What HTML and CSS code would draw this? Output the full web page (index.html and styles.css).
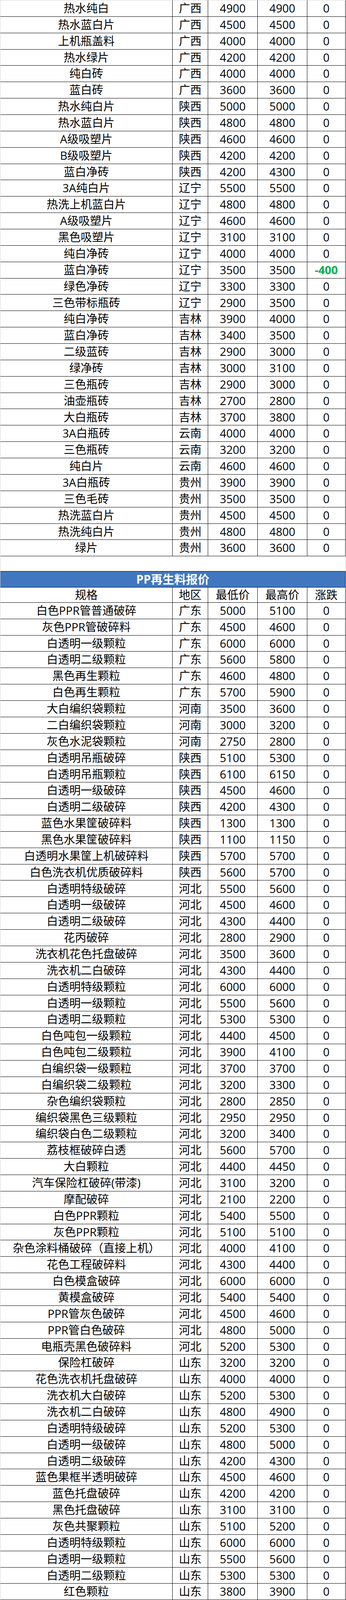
FILE: index.html
```html
<!DOCTYPE html>
<html lang="zh-CN">
<head>
<meta charset="utf-8">
<title>报价</title>
<link rel="stylesheet" href="styles.css">
</head>
<body>
<div class="sheet">
  <div class="tbl tbl-a">
    <div class="row"><div class="c c1">热水纯白</div><div class="c c2">广西</div><div class="c c3">4900</div><div class="c c4">4900</div><div class="c c5">0</div></div>
    <div class="row"><div class="c c1">热水蓝白片</div><div class="c c2">广西</div><div class="c c3">4500</div><div class="c c4">4500</div><div class="c c5">0</div></div>
    <div class="row"><div class="c c1">上机瓶盖料</div><div class="c c2">广西</div><div class="c c3">4000</div><div class="c c4">4000</div><div class="c c5">0</div></div>
    <div class="row"><div class="c c1">热水绿片</div><div class="c c2">广西</div><div class="c c3">4200</div><div class="c c4">4200</div><div class="c c5">0</div></div>
    <div class="row"><div class="c c1">纯白砖</div><div class="c c2">广西</div><div class="c c3">4000</div><div class="c c4">4000</div><div class="c c5">0</div></div>
    <div class="row"><div class="c c1">蓝白砖</div><div class="c c2">广西</div><div class="c c3">3600</div><div class="c c4">3600</div><div class="c c5">0</div></div>
    <div class="row"><div class="c c1">热水纯白片</div><div class="c c2">陕西</div><div class="c c3">5000</div><div class="c c4">5000</div><div class="c c5">0</div></div>
    <div class="row"><div class="c c1">热水蓝白片</div><div class="c c2">陕西</div><div class="c c3">4800</div><div class="c c4">4800</div><div class="c c5">0</div></div>
    <div class="row"><div class="c c1">A级吸塑片</div><div class="c c2">陕西</div><div class="c c3">4600</div><div class="c c4">4600</div><div class="c c5">0</div></div>
    <div class="row"><div class="c c1">B级吸塑片</div><div class="c c2">陕西</div><div class="c c3">4200</div><div class="c c4">4200</div><div class="c c5">0</div></div>
    <div class="row"><div class="c c1">蓝白净砖</div><div class="c c2">陕西</div><div class="c c3">4200</div><div class="c c4">4300</div><div class="c c5">0</div></div>
    <div class="row"><div class="c c1">3A纯白片</div><div class="c c2">辽宁</div><div class="c c3">5500</div><div class="c c4">5500</div><div class="c c5">0</div></div>
    <div class="row"><div class="c c1">热洗上机蓝白片</div><div class="c c2">辽宁</div><div class="c c3">4800</div><div class="c c4">4800</div><div class="c c5">0</div></div>
    <div class="row"><div class="c c1">A级吸塑片</div><div class="c c2">辽宁</div><div class="c c3">4600</div><div class="c c4">4600</div><div class="c c5">0</div></div>
    <div class="row"><div class="c c1">黑色吸塑片</div><div class="c c2">辽宁</div><div class="c c3">3100</div><div class="c c4">3100</div><div class="c c5">0</div></div>
    <div class="row"><div class="c c1">纯白净砖</div><div class="c c2">辽宁</div><div class="c c3">4000</div><div class="c c4">4000</div><div class="c c5">0</div></div>
    <div class="row"><div class="c c1">蓝白净砖</div><div class="c c2">辽宁</div><div class="c c3">3500</div><div class="c c4">3500</div><div class="c c5 down">-400</div></div>
    <div class="row"><div class="c c1">绿色净砖</div><div class="c c2">辽宁</div><div class="c c3">3300</div><div class="c c4">3300</div><div class="c c5">0</div></div>
    <div class="row"><div class="c c1">三色带标瓶砖</div><div class="c c2">辽宁</div><div class="c c3">2900</div><div class="c c4">3500</div><div class="c c5">0</div></div>
    <div class="row"><div class="c c1">纯白净砖</div><div class="c c2">吉林</div><div class="c c3">3900</div><div class="c c4">4000</div><div class="c c5">0</div></div>
    <div class="row"><div class="c c1">蓝白净砖</div><div class="c c2">吉林</div><div class="c c3">3400</div><div class="c c4">3500</div><div class="c c5">0</div></div>
    <div class="row"><div class="c c1">二级蓝砖</div><div class="c c2">吉林</div><div class="c c3">2900</div><div class="c c4">3000</div><div class="c c5">0</div></div>
    <div class="row"><div class="c c1">绿净砖</div><div class="c c2">吉林</div><div class="c c3">3000</div><div class="c c4">3100</div><div class="c c5">0</div></div>
    <div class="row"><div class="c c1">三色瓶砖</div><div class="c c2">吉林</div><div class="c c3">2900</div><div class="c c4">3000</div><div class="c c5">0</div></div>
    <div class="row"><div class="c c1">油壶瓶砖</div><div class="c c2">吉林</div><div class="c c3">2700</div><div class="c c4">2800</div><div class="c c5">0</div></div>
    <div class="row"><div class="c c1">大白瓶砖</div><div class="c c2">吉林</div><div class="c c3">3700</div><div class="c c4">3800</div><div class="c c5">0</div></div>
    <div class="row"><div class="c c1">3A白瓶砖</div><div class="c c2">云南</div><div class="c c3">4000</div><div class="c c4">4000</div><div class="c c5">0</div></div>
    <div class="row"><div class="c c1">三色瓶砖</div><div class="c c2">云南</div><div class="c c3">3200</div><div class="c c4">3200</div><div class="c c5">0</div></div>
    <div class="row"><div class="c c1">纯白片</div><div class="c c2">云南</div><div class="c c3">4600</div><div class="c c4">4600</div><div class="c c5">0</div></div>
    <div class="row"><div class="c c1">3A白瓶砖</div><div class="c c2">贵州</div><div class="c c3">3900</div><div class="c c4">3900</div><div class="c c5">0</div></div>
    <div class="row"><div class="c c1">三色毛砖</div><div class="c c2">贵州</div><div class="c c3">3500</div><div class="c c4">3500</div><div class="c c5">0</div></div>
    <div class="row"><div class="c c1">热洗蓝白片</div><div class="c c2">贵州</div><div class="c c3">4500</div><div class="c c4">4500</div><div class="c c5">0</div></div>
    <div class="row"><div class="c c1">热洗纯白片</div><div class="c c2">贵州</div><div class="c c3">4800</div><div class="c c4">4800</div><div class="c c5">0</div></div>
    <div class="row"><div class="c c1">绿片</div><div class="c c2">贵州</div><div class="c c3">3600</div><div class="c c4">3600</div><div class="c c5">0</div></div>
  </div>

  <div class="gap"></div>

  <div class="title">PP再生料报价</div>
  <div class="tbl tbl-b">
    <div class="row head"><div class="c c1">规格</div><div class="c c2">地区</div><div class="c c3">最低价</div><div class="c c4">最高价</div><div class="c c5">涨跌</div></div>
    <div class="row"><div class="c c1">白色PPR管普通破碎</div><div class="c c2">广东</div><div class="c c3">5000</div><div class="c c4">5100</div><div class="c c5">0</div></div>
    <div class="row"><div class="c c1">灰色PPR管破碎料</div><div class="c c2">广东</div><div class="c c3">4500</div><div class="c c4">4600</div><div class="c c5">0</div></div>
    <div class="row"><div class="c c1">白透明一级颗粒</div><div class="c c2">广东</div><div class="c c3">6000</div><div class="c c4">6000</div><div class="c c5">0</div></div>
    <div class="row"><div class="c c1">白透明二级颗粒</div><div class="c c2">广东</div><div class="c c3">5600</div><div class="c c4">5800</div><div class="c c5">0</div></div>
    <div class="row"><div class="c c1">黑色再生颗粒</div><div class="c c2">广东</div><div class="c c3">4600</div><div class="c c4">4800</div><div class="c c5">0</div></div>
    <div class="row"><div class="c c1">白色再生颗粒</div><div class="c c2">广东</div><div class="c c3">5700</div><div class="c c4">5900</div><div class="c c5">0</div></div>
    <div class="row"><div class="c c1">大白编织袋颗粒</div><div class="c c2">河南</div><div class="c c3">3500</div><div class="c c4">3600</div><div class="c c5">0</div></div>
    <div class="row"><div class="c c1">二白编织袋颗粒</div><div class="c c2">河南</div><div class="c c3">3000</div><div class="c c4">3200</div><div class="c c5">0</div></div>
    <div class="row"><div class="c c1">灰色水泥袋颗粒</div><div class="c c2">河南</div><div class="c c3">2750</div><div class="c c4">2800</div><div class="c c5">0</div></div>
    <div class="row"><div class="c c1">白透明吊瓶破碎</div><div class="c c2">陕西</div><div class="c c3">5100</div><div class="c c4">5300</div><div class="c c5">0</div></div>
    <div class="row"><div class="c c1">白透明吊瓶颗粒</div><div class="c c2">陕西</div><div class="c c3">6100</div><div class="c c4">6150</div><div class="c c5">0</div></div>
    <div class="row"><div class="c c1">白透明一级破碎</div><div class="c c2">陕西</div><div class="c c3">4500</div><div class="c c4">4600</div><div class="c c5">0</div></div>
    <div class="row"><div class="c c1">白透明二级破碎</div><div class="c c2">陕西</div><div class="c c3">4200</div><div class="c c4">4300</div><div class="c c5">0</div></div>
    <div class="row"><div class="c c1">蓝色水果筐破碎料</div><div class="c c2">陕西</div><div class="c c3">1300</div><div class="c c4">1300</div><div class="c c5">0</div></div>
    <div class="row"><div class="c c1">黑色水果筐破碎料</div><div class="c c2">陕西</div><div class="c c3">1100</div><div class="c c4">1150</div><div class="c c5">0</div></div>
    <div class="row"><div class="c c1">白透明水果筐上机破碎料</div><div class="c c2">陕西</div><div class="c c3">5700</div><div class="c c4">5700</div><div class="c c5">0</div></div>
    <div class="row"><div class="c c1">白色洗衣机优质破碎料</div><div class="c c2">陕西</div><div class="c c3">5600</div><div class="c c4">5700</div><div class="c c5">0</div></div>
    <div class="row"><div class="c c1">白透明特级破碎</div><div class="c c2">河北</div><div class="c c3">5500</div><div class="c c4">5600</div><div class="c c5">0</div></div>
    <div class="row"><div class="c c1">白透明一级破碎</div><div class="c c2">河北</div><div class="c c3">4500</div><div class="c c4">4600</div><div class="c c5">0</div></div>
    <div class="row"><div class="c c1">白透明二级破碎</div><div class="c c2">河北</div><div class="c c3">4300</div><div class="c c4">4400</div><div class="c c5">0</div></div>
    <div class="row"><div class="c c1">花丙破碎</div><div class="c c2">河北</div><div class="c c3">2800</div><div class="c c4">2900</div><div class="c c5">0</div></div>
    <div class="row"><div class="c c1">洗衣机花色托盘破碎</div><div class="c c2">河北</div><div class="c c3">3500</div><div class="c c4">3600</div><div class="c c5">0</div></div>
    <div class="row"><div class="c c1">洗衣机二白破碎</div><div class="c c2">河北</div><div class="c c3">4300</div><div class="c c4">4400</div><div class="c c5">0</div></div>
    <div class="row"><div class="c c1">白透明特级颗粒</div><div class="c c2">河北</div><div class="c c3">6000</div><div class="c c4">6000</div><div class="c c5">0</div></div>
    <div class="row"><div class="c c1">白透明一级颗粒</div><div class="c c2">河北</div><div class="c c3">5500</div><div class="c c4">5600</div><div class="c c5">0</div></div>
    <div class="row"><div class="c c1">白透明二级颗粒</div><div class="c c2">河北</div><div class="c c3">5300</div><div class="c c4">5300</div><div class="c c5">0</div></div>
    <div class="row"><div class="c c1">白色吨包一级颗粒</div><div class="c c2">河北</div><div class="c c3">4400</div><div class="c c4">4500</div><div class="c c5">0</div></div>
    <div class="row"><div class="c c1">白色吨包二级颗粒</div><div class="c c2">河北</div><div class="c c3">3900</div><div class="c c4">4100</div><div class="c c5">0</div></div>
    <div class="row"><div class="c c1">白编织袋一级颗粒</div><div class="c c2">河北</div><div class="c c3">3700</div><div class="c c4">3700</div><div class="c c5">0</div></div>
    <div class="row"><div class="c c1">白编织袋二级颗粒</div><div class="c c2">河北</div><div class="c c3">3200</div><div class="c c4">3300</div><div class="c c5">0</div></div>
    <div class="row"><div class="c c1">杂色编织袋颗粒</div><div class="c c2">河北</div><div class="c c3">2800</div><div class="c c4">2850</div><div class="c c5">0</div></div>
    <div class="row"><div class="c c1">编织袋黑色三级颗粒</div><div class="c c2">河北</div><div class="c c3">2950</div><div class="c c4">2950</div><div class="c c5">0</div></div>
    <div class="row"><div class="c c1">编织袋白色二级颗粒</div><div class="c c2">河北</div><div class="c c3">3200</div><div class="c c4">3400</div><div class="c c5">0</div></div>
    <div class="row"><div class="c c1">荔枝框破碎白透</div><div class="c c2">河北</div><div class="c c3">5600</div><div class="c c4">5700</div><div class="c c5">0</div></div>
    <div class="row"><div class="c c1">大白颗粒</div><div class="c c2">河北</div><div class="c c3">4400</div><div class="c c4">4450</div><div class="c c5">0</div></div>
    <div class="row"><div class="c c1">汽车保险杠破碎(带漆)</div><div class="c c2">河北</div><div class="c c3">3100</div><div class="c c4">3200</div><div class="c c5">0</div></div>
    <div class="row"><div class="c c1">摩配破碎</div><div class="c c2">河北</div><div class="c c3">2100</div><div class="c c4">2200</div><div class="c c5">0</div></div>
    <div class="row"><div class="c c1">白色PPR颗粒</div><div class="c c2">河北</div><div class="c c3">5400</div><div class="c c4">5500</div><div class="c c5">0</div></div>
    <div class="row"><div class="c c1">灰色PPR颗粒</div><div class="c c2">河北</div><div class="c c3">5100</div><div class="c c4">5100</div><div class="c c5">0</div></div>
    <div class="row"><div class="c c1">杂色涂料桶破碎（直接上机）</div><div class="c c2">河北</div><div class="c c3">4000</div><div class="c c4">4100</div><div class="c c5">0</div></div>
    <div class="row"><div class="c c1">花色工程破碎料</div><div class="c c2">河北</div><div class="c c3">4300</div><div class="c c4">4400</div><div class="c c5">0</div></div>
    <div class="row"><div class="c c1">白色模盒破碎</div><div class="c c2">河北</div><div class="c c3">6000</div><div class="c c4">6000</div><div class="c c5">0</div></div>
    <div class="row"><div class="c c1">黄模盒破碎</div><div class="c c2">河北</div><div class="c c3">5400</div><div class="c c4">5400</div><div class="c c5">0</div></div>
    <div class="row"><div class="c c1">PPR管灰色破碎</div><div class="c c2">河北</div><div class="c c3">4500</div><div class="c c4">4600</div><div class="c c5">0</div></div>
    <div class="row"><div class="c c1">PPR管白色破碎</div><div class="c c2">河北</div><div class="c c3">4800</div><div class="c c4">5000</div><div class="c c5">0</div></div>
    <div class="row"><div class="c c1">电瓶壳黑色破碎料</div><div class="c c2">河北</div><div class="c c3">5200</div><div class="c c4">5300</div><div class="c c5">0</div></div>
    <div class="row"><div class="c c1">保险杠破碎</div><div class="c c2">山东</div><div class="c c3">3200</div><div class="c c4">3200</div><div class="c c5">0</div></div>
    <div class="row"><div class="c c1">花色洗衣机托盘破碎</div><div class="c c2">山东</div><div class="c c3">4000</div><div class="c c4">4000</div><div class="c c5">0</div></div>
    <div class="row"><div class="c c1">洗衣机大白破碎</div><div class="c c2">山东</div><div class="c c3">5200</div><div class="c c4">5300</div><div class="c c5">0</div></div>
    <div class="row"><div class="c c1">洗衣机二白破碎</div><div class="c c2">山东</div><div class="c c3">4800</div><div class="c c4">4900</div><div class="c c5">0</div></div>
    <div class="row"><div class="c c1">白透明特级破碎</div><div class="c c2">山东</div><div class="c c3">5200</div><div class="c c4">5300</div><div class="c c5">0</div></div>
    <div class="row"><div class="c c1">白透明一级破碎</div><div class="c c2">山东</div><div class="c c3">4800</div><div class="c c4">5000</div><div class="c c5">0</div></div>
    <div class="row"><div class="c c1">白透明二级破碎</div><div class="c c2">山东</div><div class="c c3">4200</div><div class="c c4">4300</div><div class="c c5">0</div></div>
    <div class="row"><div class="c c1">蓝色果框半透明破碎</div><div class="c c2">山东</div><div class="c c3">4500</div><div class="c c4">4600</div><div class="c c5">0</div></div>
    <div class="row"><div class="c c1">蓝色托盘破碎</div><div class="c c2">山东</div><div class="c c3">4200</div><div class="c c4">4200</div><div class="c c5">0</div></div>
    <div class="row"><div class="c c1">黑色托盘破碎</div><div class="c c2">山东</div><div class="c c3">3100</div><div class="c c4">3100</div><div class="c c5">0</div></div>
    <div class="row"><div class="c c1">灰色共聚颗粒</div><div class="c c2">山东</div><div class="c c3">5100</div><div class="c c4">5200</div><div class="c c5">0</div></div>
    <div class="row"><div class="c c1">白透明特级颗粒</div><div class="c c2">山东</div><div class="c c3">6000</div><div class="c c4">6000</div><div class="c c5">0</div></div>
    <div class="row"><div class="c c1">白透明一级颗粒</div><div class="c c2">山东</div><div class="c c3">5500</div><div class="c c4">5600</div><div class="c c5">0</div></div>
    <div class="row"><div class="c c1">白透明二级颗粒</div><div class="c c2">山东</div><div class="c c3">5300</div><div class="c c4">5300</div><div class="c c5">0</div></div>
    <div class="row"><div class="c c1">红色颗粒</div><div class="c c2">山东</div><div class="c c3">3800</div><div class="c c4">3900</div><div class="c c5">0</div></div>
  </div>
</div>
</body>
</html>
```

FILE: styles.css
```css
html, body {
  margin: 0;
  padding: 0;
  background: #ffffff;
}

/* The sheet fills the window; each band gets a share proportional to
   its 886x4206 design height (43px rows, 40px header, 41px title). */
.sheet {
  box-sizing: border-box;
  width: 886px;
  height: 100vh;
  max-height: 4206px;
  border-top: 1px solid #d4d4d4;
  border-left: 1px solid #d4d4d4;
  display: flex;
  flex-direction: column;
  overflow: hidden;
  font-family: "Open Sans", "Noto Sans CJK SC", sans-serif;
  font-size: 29px;
  color: #000000;
}

.tbl {
  display: flex;
  flex-direction: column;
  min-height: 0;
}

.tbl-a { flex: 1462 1 0; }
.tbl-b { flex: 2663 1 0; }

.row {
  display: flex;
  flex: 43 1 0;
  min-height: 0;
}

.row.head {
  flex: 40 1 0;
}

.c {
  box-sizing: border-box;
  border-right: 1px solid #000000;
  border-bottom: 1px solid #000000;
  display: flex;
  align-items: center;
  justify-content: center;
  white-space: nowrap;
  line-height: 1.2;
  overflow: visible;
}

.c1 { width: 441px; }
.c2 { width: 91px; }
.c3 { width: 127px; }
.c4 { width: 127px; }
.c5 { width: 98px; }

.down {
  color: #00b050;
  font-weight: 700;
}

.gap {
  box-sizing: border-box;
  width: 884px;
  flex: 39 1 0;
  min-height: 0;
  border-right: 1px solid #d0d0d0;
}

.title {
  box-sizing: border-box;
  width: 884px;
  flex: 41 1 0;
  min-height: 0;
  border-top: 1px solid #000000;
  border-bottom: 1px solid #000000;
  border-right: 1px solid #000000;
  background: #4177bf;
  color: #ffffff;
  font-size: 30px;
  font-weight: 700;
  display: flex;
  align-items: center;
  justify-content: center;
  line-height: 1.2;
}
```
